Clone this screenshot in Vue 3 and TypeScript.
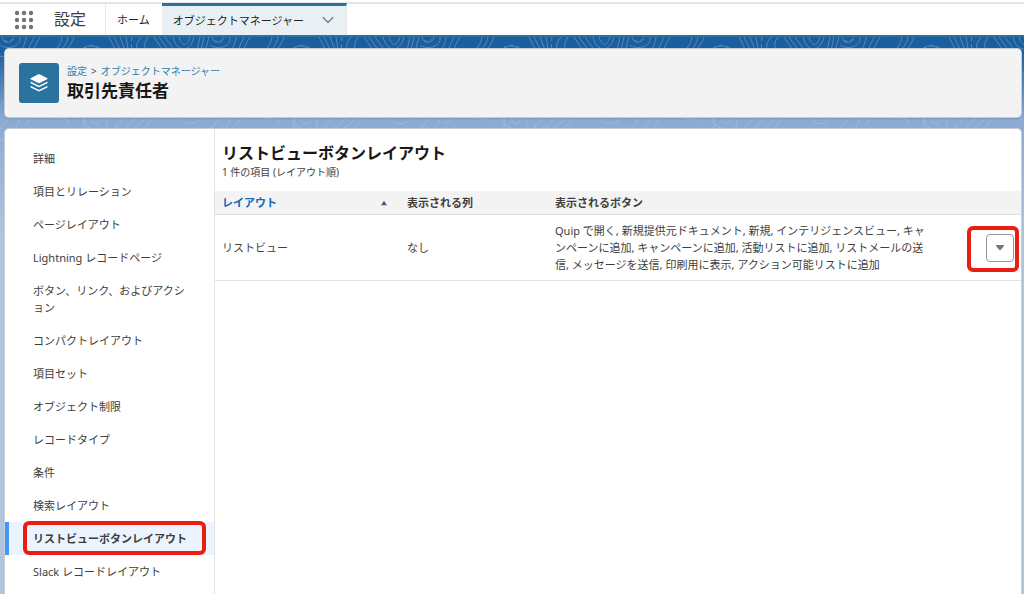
<script setup lang="ts">
interface NavItem {
  label: string
  active?: boolean
}

const navItems: NavItem[] = [
  { label: '詳細' },
  { label: '項目とリレーション' },
  { label: 'ページレイアウト' },
  { label: 'Lightning レコードページ' },
  { label: 'ボタン、リンク、およびアクション' },
  { label: 'コンパクトレイアウト' },
  { label: '項目セット' },
  { label: 'オブジェクト制限' },
  { label: 'レコードタイプ' },
  { label: '条件' },
  { label: '検索レイアウト' },
  { label: 'リストビューボタンレイアウト', active: true },
  { label: 'Slack レコードレイアウト' },
]

const buttonLines: string[] = [
  'Quip で開く, 新規提供元ドキュメント, 新規, インテリジェンスビュー, キャ',
  'ンペーンに追加, キャンペーンに追加, 活動リストに追加, リストメールの送',
  '信, メッセージを送信, 印刷用に表示, アクション可能リストに追加',
]

const dots: number[] = [0, 1, 2, 3, 4, 5, 6, 7, 8]
</script>

<template>
  <div class="page">
    <header class="topbar">
      <button class="launcher" type="button" aria-label="アプリケーションランチャー">
        <svg width="20" height="20" viewBox="0 0 20 20" fill="#747474">
          <circle v-for="d in dots" :key="d" :cx="3 + (d % 3) * 7" :cy="3 + Math.floor(d / 3) * 7" r="2.2" />
        </svg>
      </button>
      <span class="app-name">設定</span>
      <nav class="tabs">
        <a class="tab" href="#">ホーム</a>
        <div class="tab current">
          <a href="#">オブジェクトマネージャー</a>
          <button class="chevron" type="button" aria-label="メニューを開く">
            <svg width="12" height="8" viewBox="0 0 12 8" fill="none" stroke="#7a8085" stroke-width="1.4" stroke-linecap="round" stroke-linejoin="round">
              <path d="M1.2 1.5 6 6.500 10.800 1.500" />
            </svg>
          </button>
        </div>
      </nav>
    </header>

    <main class="body">
      <svg class="backdrop" aria-hidden="true">
        <defs>
          <pattern id="contours" width="210" height="180" patternUnits="userSpaceOnUse">
            <g fill="none" stroke="#fff" stroke-width="1">
              <path d="M-6 0C-4 14 22 14 20 0M2 0C3 7 13 7 14 0M26 0C24 18 10 22-8 18M29 17C28 8 33 4 34 0M34 17C33 10 38 4 40 0M50 17C58 12 61 6 62 0M55 18C63 13 67 6 68 0M60 18C68 13 72 6 74 0" />
              <path d="M77 18C82 8 96 4 104 18M84 18C89 11 96 12 98 18M109 0 118 18M114 0 123 18M120 0 127 18M126 0 129 18M141 0C134 8 137 14 140 18M148 0C142 8 145 14 151 18M154 0 166 18M159 0 172 18M165 0 178 18" />
              <path d="M173 0C177 16 190 16 194 0M179 0C182 10 187 10 190 0M200 0 196 18M204 0 200 18M209 0 204 18" />
              <path stroke-dasharray="4 3" d="M80 18C84 5 100 5 104 18M132 0C130 8 132 14 134 18M4 3C6 5 10 5 12 2" />
              <path d="M0 92C16 78 8 65 22 55S45 40 37 28M0 104C24 92 18 72 32 62S54 44 48 30M-3 70C12 62 4 48 13 37M70 85C58 76 60 85 52 80S48 72 54 70 64 78 72 74 75 68 80 72 88 88 80 96" />
              <path d="M110 70C118 75 125 73 124 80S113 85 116 91M124 94C130 81 143 80 150 70M133 92C143 84 149 80 158 70M146 90C153 79 163 74 174 78S183 89 194 86 202 70 211 75" />
              <path d="M83 83C81 72 98 69 105 81S100 96 91 91 83 88 83 83M92 82a4 4 0 1 0 8 1 4 4 0 1 0-8-1M25 87C38 79 31 70 45 68M120 55C135 40 147 63 164 46S185 42 190 33" />
              <path d="M0 138C18 122 29 139 42 130S60 108 75 116 91 139 111 128 136 109 153 118 175 146 210 138M0 158C20 142 33 155 52 145S76 126 91 137 119 149 132 137 161 139 174 155 201 165 210 158" />
            </g>
          </pattern>
          <linearGradient id="fade" x1="0" y1="0" x2="0" y2="1">
            <stop offset="0" stop-color="#fff" stop-opacity="1" />
            <stop offset="1" stop-color="#fff" stop-opacity="0" />
          </linearGradient>
          <mask id="fademask"><rect width="100%" height="100%" fill="url(#fade)" /></mask>
        </defs>
        <rect width="100%" height="100%" fill="url(#contours)" opacity="0.27" mask="url(#fademask)" />
      </svg>

      <section class="card page-header">
        <span class="object-icon">
          <svg width="20" height="20" viewBox="0 0 20 20" fill="#fff">
            <path d="M9.300 1.300 1.700 5.200Q1 5.700 1.700 6.200L9.300 10Q10 10.300 10.700 10L18.300 6.200Q19 5.700 18.300 5.200L10.700 1.300Q10 1 9.300 1.300Z" />
            <path d="m2 8.800 8 4 8-4q1.300.7.300 1.500l-7.600 3.800q-.7.300-1.400 0L1.700 10.300Q.8 9.500 2 8.800Z" />
            <path d="m2 12.900 8 4 8-4q1.300.7.300 1.500l-7.600 3.800q-.7.300-1.400 0l-7.600-3.800Q.8 13.600 2 12.900Z" />
          </svg>
        </span>
        <div>
          <nav class="crumbs">
            <a href="#">設定</a><span class="sep">&gt;</span><a href="#">オブジェクトマネージャー</a>
          </nav>
          <h1>取引先責任者</h1>
        </div>
      </section>

      <section class="card workspace">
        <nav class="sidebar">
          <ul>
            <li v-for="item in navItems" :key="item.label" :class="{ active: item.active }">
              <a href="#">{{ item.label }}</a>
              <span v-if="item.active" class="mark nav-mark"></span>
            </li>
          </ul>
        </nav>

        <div class="content">
          <div class="heading">
            <h2>リストビューボタンレイアウト</h2>
            <p>1 件の項目 (レイアウト順)</p>
          </div>
          <table>
            <thead>
              <tr>
                <th class="col-layout" scope="col">
                  <a class="sort" href="#">
                    <span>レイアウト</span>
                    <svg width="8" height="6" viewBox="0 0 8 6" fill="#3f5f83"><path d="M4 .8 7 5.200H1Z" /></svg>
                  </a>
                </th>
                <th class="col-columns" scope="col">表示される列</th>
                <th scope="col">表示されるボタン</th>
                <th class="col-action"></th>
              </tr>
            </thead>
            <tbody>
              <tr>
                <td>リストビュー</td>
                <td>なし</td>
                <td class="buttons"><span v-for="line in buttonLines" :key="line">{{ line }}</span></td>
                <td class="action">
                  <div class="menu-wrap">
                    <button class="menu" type="button" aria-label="アクションを表示">
                      <svg width="10" height="6" viewBox="0 0 10 6" fill="#747474"><path d="M1.300 0H8.700Q9.500.3 9 1L5.600 5Q5 5.500 4.400 5L1 1Q.5.3 1.300 0Z" /></svg>
                    </button>
                    <span class="mark menu-mark"></span>
                  </div>
                </td>
              </tr>
            </tbody>
          </table>
        </div>
      </section>
    </main>
  </div>
</template>

<style>
body {
  margin: 0;
  overflow: hidden;
}
</style>

<style scoped>
* {
  box-sizing: border-box;
}
.page {
  height: 100vh;
  display: flex;
  flex-direction: column;
  overflow: hidden;
  font: 11px/17px "Noto Sans", "Noto Sans CJK JP", sans-serif;
  color: #3e3e3c;
  background: #fff;
}
a {
  color: inherit;
  text-decoration: none;
}
button {
  padding: 0;
  border: 0;
  background: none;
  display: flex;
  align-items: center;
  justify-content: center;
}
h1, h2, p, ul {
  margin: 0;
  padding: 0;
}
.topbar {
  flex: none;
  display: flex;
  align-items: stretch;
  height: 33px;
  margin-top: 2px;
  border-top: 2px solid #e5e5e5;
}
.launcher {
  width: 20px;
  margin-left: 14px;
}
.app-name {
  width: 72px;
  padding-left: 20px;
  font-size: 16px;
  line-height: 31px;
  border-right: 1px solid #e8e8e8;
}
.tabs {
  display: flex;
}
.tab {
  display: flex;
  align-items: center;
  padding: 0 12px 0 11px;
  color: #222;
}
.tab.current {
  gap: 18px;
  margin-top: -1px;
  padding-bottom: 1px;
  border-top: 3px solid #2a739e;
  border-right: 1px solid #dfe5e8;
  background: #e9f0f4;
}
.body {
  position: relative;
  flex: 1;
  min-height: 0;
  display: flex;
  flex-direction: column;
  gap: 12px;
  padding: 12px 3px 0 5px;
  border-top: 2px solid #2a739e;
  background: linear-gradient(#195e9f 0, #1b5f9f 14px, #8aaad3 82px, #b0c4df 200px);
}
.backdrop {
  position: absolute;
  inset: 0 0 auto 0;
  width: 100%;
  height: 220px;
}
.card {
  position: relative;
  border-radius: 4px;
  box-shadow: 0 0 0 1px #c9cdd2, 0 2px 2px rgba(0, 0, 0, 0.12);
}
.page-header {
  flex: none;
  display: flex;
  align-items: center;
  gap: 8px;
  height: 68px;
  padding: 0 14px;
  background: #f3f3f3;
}
.object-icon {
  display: flex;
  align-items: center;
  justify-content: center;
  width: 40px;
  height: 40px;
  border-radius: 3px;
  background: #2a739e;
}
.crumbs {
  font-size: 10px;
  line-height: 16px;
  color: #2f7dab;
}
.sep {
  margin: 0 4px;
  color: #555;
}
h1 {
  font-size: 17px;
  line-height: 24px;
  color: #181818;
}
.workspace {
  flex: 1;
  min-height: 0;
  display: flex;
  background: #fff;
  border-radius: 4px 4px 0 0;
}
.sidebar {
  flex: none;
  width: 210px;
  padding-top: 13px;
  border-right: 1px solid #e3e3e3;
}
ul {
  list-style: none;
}
li {
  position: relative;
}
li a {
  display: block;
  padding: 8px 20px 8px 28px;
}
li.active {
  background: #ebf3fe;
  font-weight: 700;
}
li.active a {
  padding-left: 24px;
  border-left: 4px solid #4596f7;
}
.mark {
  position: absolute;
  border: 4px solid #ea1e10;
  border-radius: 6px;
  pointer-events: none;
}
.nav-mark {
  inset: -1px 8px 0 18px;
}
.content {
  flex: 1;
  min-width: 0;
}
.heading {
  padding: 13px 7px 11px;
}
h2 {
  font-size: 16px;
  line-height: 22px;
  color: #181818;
}
.heading p {
  font-size: 10px;
  line-height: 16px;
}
table {
  width: 100%;
  border-collapse: collapse;
  table-layout: fixed;
}
th, td {
  padding: 0 7px;
  text-align: left;
}
th {
  height: 23px;
  padding-top: 1px;
  background: #f3f3f3;
  border-bottom: 1px solid #dedede;
}
td {
  height: 66px;
  padding-top: 1px;
  border-bottom: 1px solid #e3e3e3;
}
.col-layout {
  width: 185px;
}
.col-columns {
  width: 148px;
}
.col-action {
  width: 60px;
}
.sort {
  display: flex;
  align-items: center;
  justify-content: space-between;
  padding-right: 5px;
  color: #1068b8;
}
.buttons span {
  display: block;
  white-space: nowrap;
}
.menu-wrap {
  position: relative;
  width: 28px;
  margin-left: auto;
}
.menu {
  width: 28px;
  height: 28px;
  border: 1px solid #949494;
  border-radius: 4px;
  background: #fff;
}
.menu-mark {
  inset: -8px -5px -10px -19px;
}
</style>
